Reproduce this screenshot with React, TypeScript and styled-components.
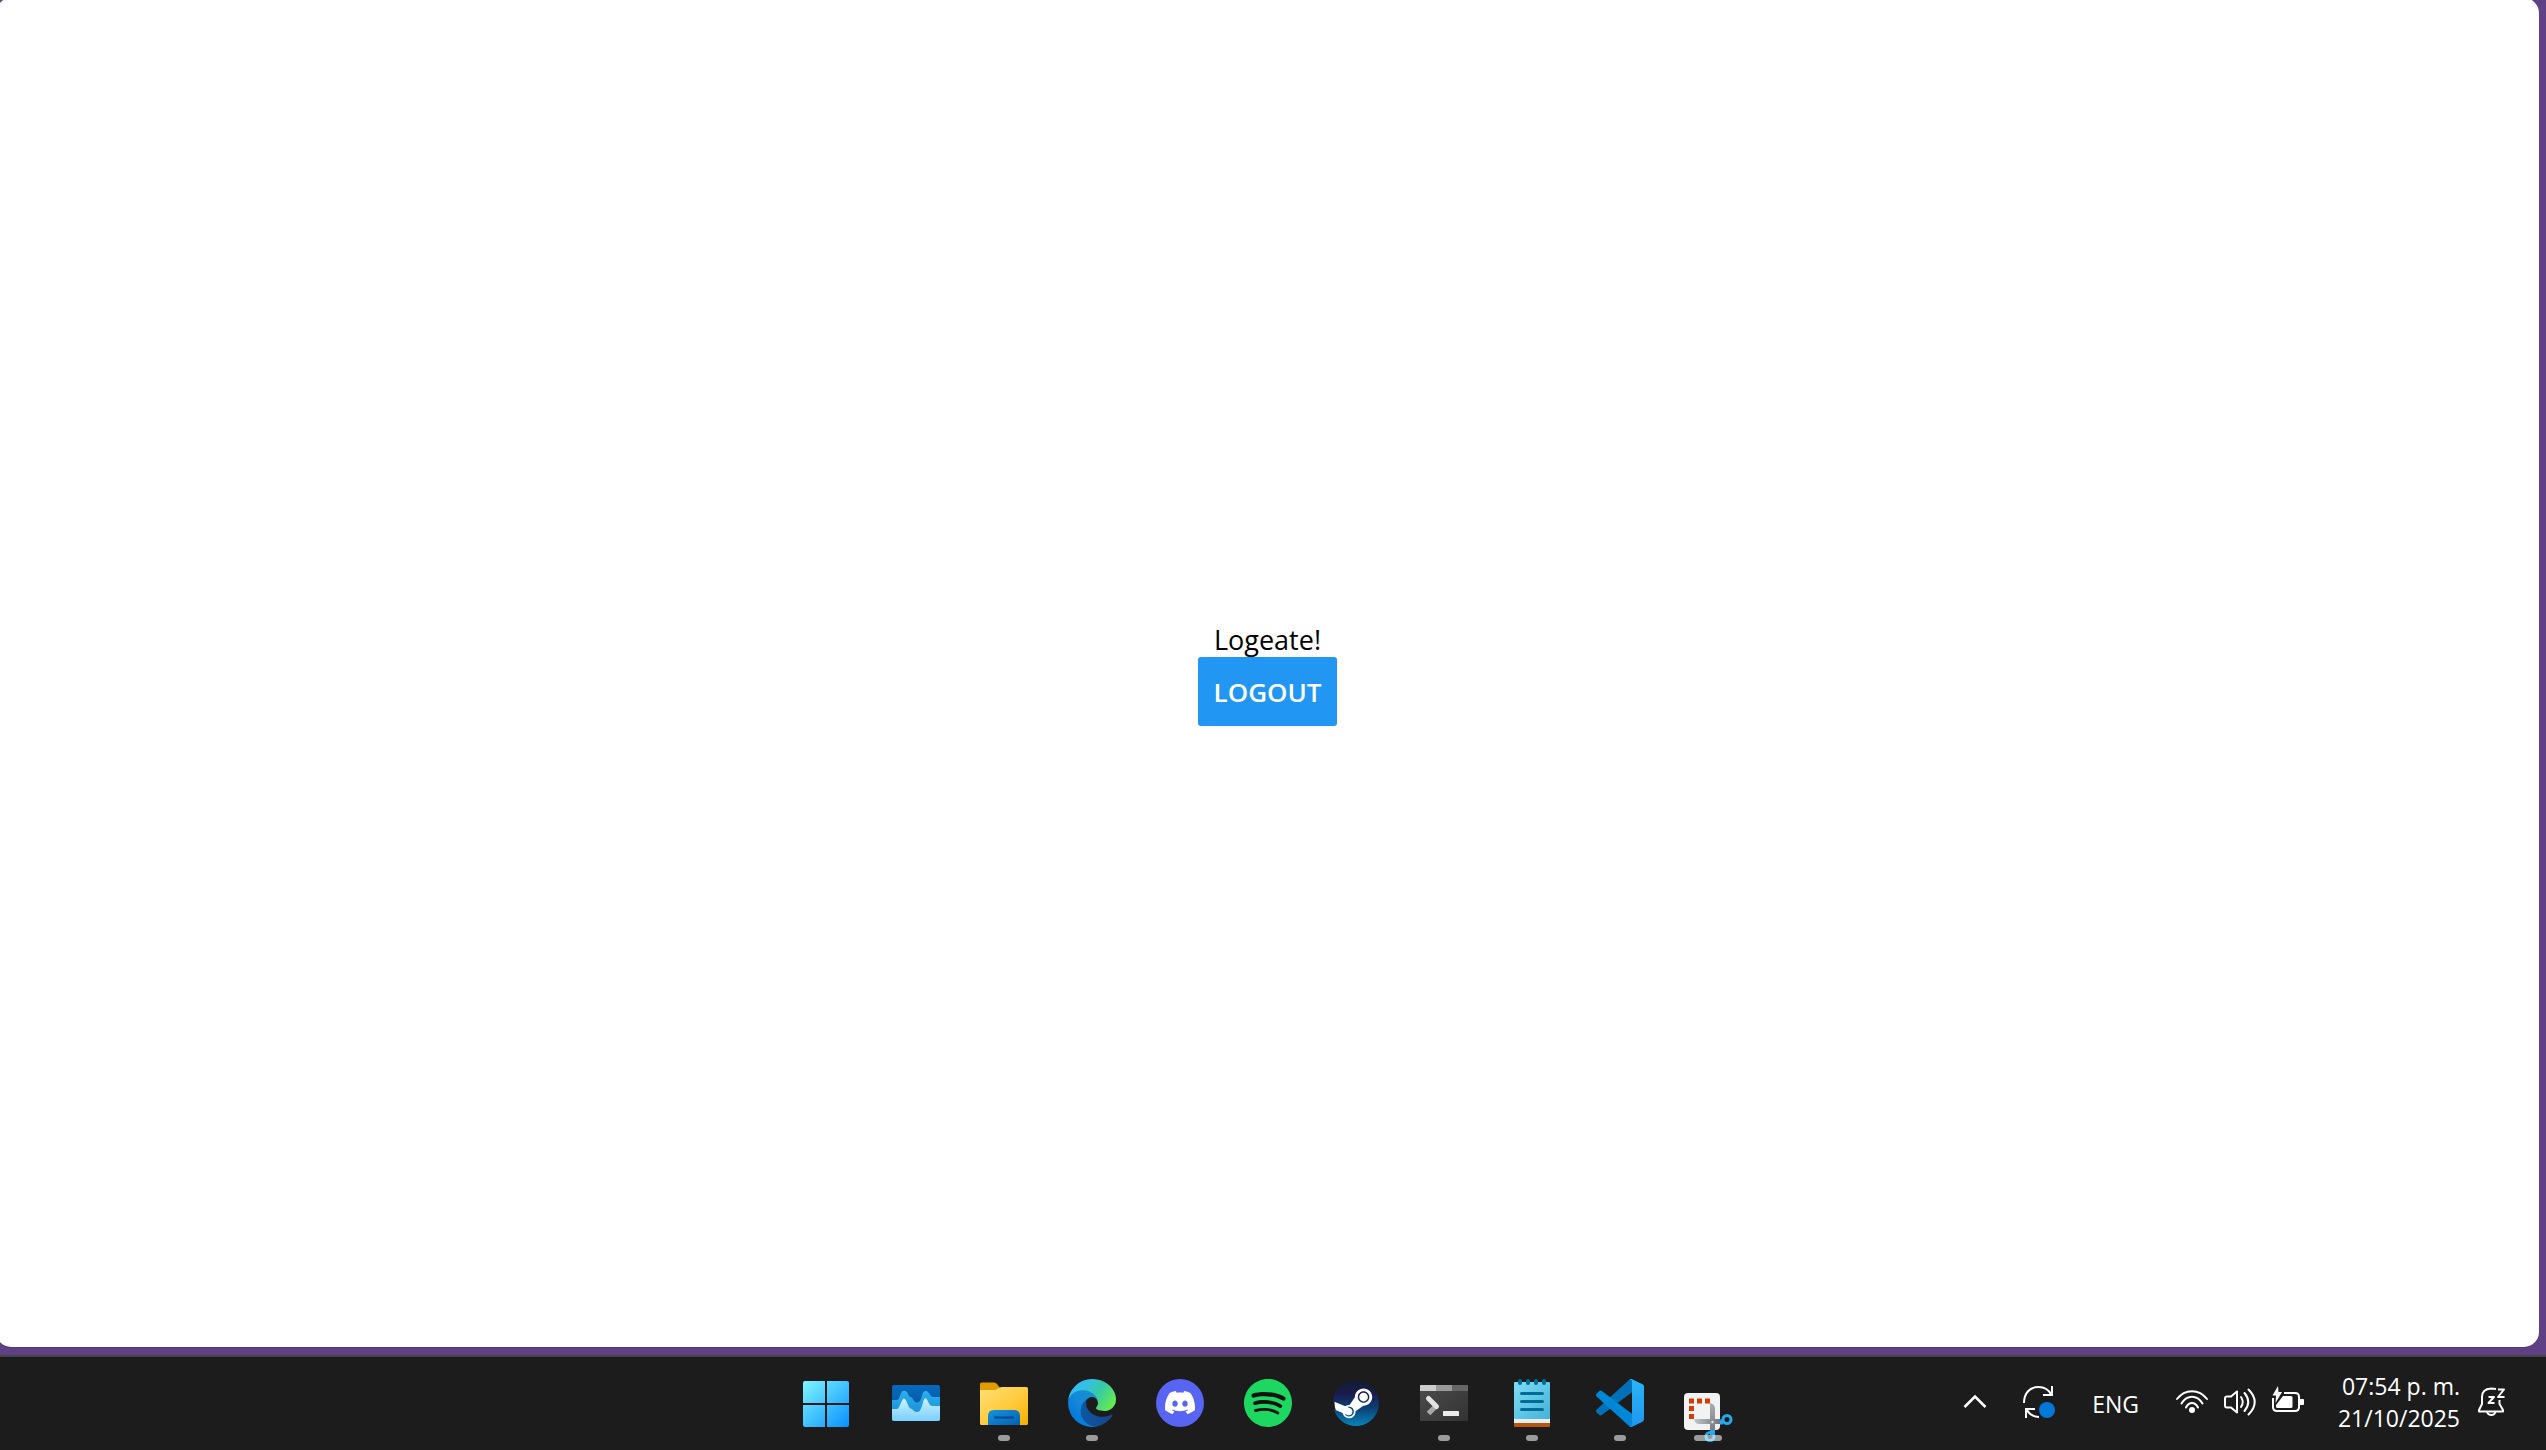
import React from "react";
import styled, { createGlobalStyle } from "styled-components";
import { SiDiscord, SiSpotify, SiSteam } from "react-icons/si";

const GlobalStyle = createGlobalStyle`
  *, *::before, *::after { box-sizing: border-box; }
  body {
    margin: 0;
    overflow: hidden;
    background: #604085;
    font-family: "Segoe UI", "Open Sans", "Noto Sans", sans-serif;
  }
`;

const Desktop = styled.div`
  display: flex;
  flex-direction: column;
  min-height: 100vh;
`;

const Window = styled.main`
  flex: 1;
  display: flex;
  flex-direction: column;
  align-items: center;
  justify-content: center;
  margin: -2px 7px 8px -4px;
  border-radius: 15px;
  background: #fff;
  box-shadow: 0 1px 0 #523a75;
`;

const Greeting = styled.p`
  margin: 0;
  padding-top: 2px;
  color: #000;
  font-size: 27px;
  line-height: 35px;
`;

const LogoutButton = styled.button`
  padding: 17px 16px 15px;
  border: 0;
  border-radius: 3px;
  background: #2196f3;
  color: #fff;
  font-family: inherit;
  font-size: 26px;
  font-weight: 600;
  line-height: 37px;
  cursor: pointer;
`;

const Taskbar = styled.footer`
  display: grid;
  grid-template-columns: 1fr auto 1fr;
  padding-right: 10px;
  border-top: 2px solid #454545;
  background: #1c1c1c;
`;

const Apps = styled.nav`
  grid-column: 2;
  display: flex;
`;

const AppButton = styled.button`
  display: flex;
  flex-direction: column;
  align-items: center;
  gap: 8px;
  width: 88px;
  padding: 22px 0 9px;
  border: 0;
  background: none;
`;

const AppIcon = styled.svg`
  display: block;
  width: 48px;
  height: 48px;
  overflow: visible;
`;

const Indicator = styled.span<{ $state: "none" | "open" | "active" }>`
  position: relative;
  width: ${(p) => (p.$state === "active" ? 28 : 12)}px;
  height: 6px;
  border-radius: 3px;
  background: ${(p) => (p.$state === "none" ? "transparent" : "rgba(255, 255, 255, 0.56)")};
`;

const Tray = styled.div`
  display: flex;
  align-items: center;
  justify-content: flex-end;
  gap: 32px;
  padding: 0 28px 3px 0;
  color: #fff;
  font-size: 23px;
  line-height: 32px;
`;

const TrayButton = styled.button`
  display: flex;
  align-items: center;
  gap: 16px;
  padding: 0;
  border: 0;
  background: none;
  color: inherit;
  font: inherit;
  text-align: right;
`;

const LanguageButton = styled(TrayButton)`
  padding: 4px 5px 0;
`;

const Clock = styled.time`
  min-width: 124px;
`;

const TrayIcon = styled.svg`
  display: block;
  width: 32px;
  height: 32px;
  overflow: visible;
  fill: none;
  stroke: #fff;
  stroke-width: 2;
`;

const StartIcon = () => (
  <AppIcon viewBox="0 0 48 48">
    <defs>
      <linearGradient id="start" gradientUnits="userSpaceOnUse" x1="0" y1="2" x2="45" y2="48">
        <stop offset="0" stopColor="#7df5ff" />
        <stop offset="0.5" stopColor="#42c2ff" />
        <stop offset="1" stopColor="#0a8fff" />
      </linearGradient>
    </defs>
    <g fill="url(#start)">
      <path d="M1 2H21V24H-1V4Q-1 2 1 2Z" />
      <path d="M23 2H43Q45 2 45 4V24H23Z" />
      <path d="M-1 26H21V48H1Q-1 48-1 46Z" />
      <path d="M23 26H45V46Q45 48 43 48H23Z" />
    </g>
  </AppIcon>
);

const MonitorIcon = () => (
  <AppIcon viewBox="0 0 48 48">
    <defs>
      <linearGradient id="monBack" x1="0" y1="0" x2="0" y2="1">
        <stop offset="0" stopColor="#0669bd" />
        <stop offset="1" stopColor="#0b4f97" />
      </linearGradient>
      <linearGradient id="monMid" x1="0" y1="0" x2="0" y2="1">
        <stop offset="0" stopColor="#2cb0ee" />
        <stop offset="1" stopColor="#1385cf" />
      </linearGradient>
      <linearGradient id="monFront" x1="0" y1="0" x2="0" y2="1">
        <stop offset="0" stopColor="#cdeeff" />
        <stop offset="1" stopColor="#79d0ff" />
      </linearGradient>
      <clipPath id="monClip"><rect y="6" width="48" height="36" rx="2" /></clipPath>
    </defs>
    <g clipPath="url(#monClip)">
      <rect y="6" width="48" height="36" fill="url(#monBack)" />
      <path d="M0 21H5Q6 21 7 19L9.500 13Q12 10.500 15 13L17 17Q18 18 20 18.500L22 22Q25 25 28 22L31 13.500Q33.500 10 36.500 13.500L39 17Q40 18 42 18H48V42H0Z" fill="url(#monMid)" />
      <path d="M0 30H5Q6 30 7 28L10 21.500Q12 17.500 14 21.500L17 28Q18 30 20 30L22 32Q25 34 27.500 32Q29 30 30 27L31.500 21.500Q33.500 17 35.500 21.500L38 26Q39 27 41 27H48V42H0Z" fill="url(#monFront)" />
    </g>
  </AppIcon>
);

const FolderIcon = () => (
  <AppIcon viewBox="0 0 48 48">
    <defs>
      <linearGradient id="folder" x1="0" y1="0" x2="1" y2="1">
        <stop offset="0" stopColor="#ffdf75" />
        <stop offset="0.55" stopColor="#ffca3c" />
        <stop offset="1" stopColor="#f5b000" />
      </linearGradient>
      <linearGradient id="pocket" x1="0" y1="0" x2="1" y2="1">
        <stop offset="0" stopColor="#1593e0" />
        <stop offset="1" stopColor="#0360b0" />
      </linearGradient>
    </defs>
    <path d="M0 5Q0 3.500 1.500 3.500H14Q16 3.500 17 5L20 9V16H0Z" fill="#e09b00" />
    <path d="M0 11H14Q16 11 18 9.500Q20 8 22 8H46.500Q48 8 48 9.500V44.500Q48 46 46.500 46H1.500Q0 46 0 44.500Z" fill="url(#folder)" />
    <path d="M8 46V37Q8 31 14 31H34Q40 31 40 37V46Z" fill="url(#pocket)" />
    <path d="M15 38.500H33" stroke="#05468c" strokeWidth="2" strokeLinecap="round" />
  </AppIcon>
);

const EdgeIcon = () => (
  <AppIcon viewBox="0 0 256 256">
    <defs>
      <linearGradient id="edgeDark" x1="0" y1="0.5" x2="1" y2="0.5">
        <stop offset="0" stopColor="#0c59a4" />
        <stop offset="1" stopColor="#16448b" />
      </linearGradient>
      <linearGradient id="edgeBlue" x1="0.9" y1="0.2" x2="0.2" y2="0.9">
        <stop offset="0" stopColor="#1691c9" />
        <stop offset="0.5" stopColor="#1588da" />
        <stop offset="1" stopColor="#0078dc" />
      </linearGradient>
      <linearGradient id="edgeGreen" x1="0" y1="0.2" x2="1" y2="0.65">
        <stop offset="0" stopColor="#35b8f2" />
        <stop offset="0.3" stopColor="#34c1e8" />
        <stop offset="0.6" stopColor="#36c9a8" />
        <stop offset="1" stopColor="#66eb4e" />
      </linearGradient>
    </defs>
    <g transform="translate(-4.63 -4.92)">
      <path fill="url(#edgeDark)" d="M235.680 195.460a93.730 93.730 0 0 1-10.540 4.710 101.870 101.870 0 0 1-35.900 6.460c-47.320 0-88.540-32.550-88.540-74.320A31.480 31.480 0 0 1 117.130 105c-42.800 1.800-53.800 46.400-53.800 72.530 0 73.880 68.090 81.370 82.760 81.370 7.910 0 19.840-2.300 27-4.560l1.310-.44a128.340 128.340 0 0 0 66.600-52.800 4 4 0 0 0-5.320-5.640z" />
      <path fill="url(#edgeBlue)" d="M110.340 246.340A79.200 79.200 0 0 1 87.600 225a80.720 80.720 0 0 1 29.530-120c3.120-1.470 8.450-4.130 15.540-4a32.350 32.350 0 0 1 25.690 13 31.880 31.880 0 0 1 6.360 18.660c0-.21 24.460-79.600-80-79.600-43.900 0-80 41.660-80 78.210a130.150 130.150 0 0 0 12.110 56 128 128 0 0 0 156.380 67.110 75.550 75.550 0 0 1-62.780-8z" />
      <path fill="url(#edgeGreen)" d="M156.940 153.780c-.81 1.050-3.300 2.500-3.300 5.660 0 2.610 1.700 5.120 4.720 7.230 14.380 10 41.490 8.680 41.560 8.680a59.560 59.560 0 0 0 30.270-8.350 61.380 61.380 0 0 0 30.430-52.880c.26-22.410-8-37.310-11.340-43.910C228.090 28.760 182.350 4.920 132.610 4.920a128 128 0 0 0-128 126.200c.48-36.540 36.800-66.050 80-66.050 3.500 0 23.460.34 42 10.070 16.340 8.580 24.900 18.940 30.850 29.210 6.180 10.670 7.280 24.150 7.280 29.520s-2.740 13.330-7.800 19.910z" />
    </g>
  </AppIcon>
);

const DiscordIcon = () => (
  <AppIcon viewBox="0 0 48 48">
    <circle cx="24" cy="24" r="24" fill="#5865f2" />
    <SiDiscord x={9} y={8.5} size={30} color="#fff" />
  </AppIcon>
);

const SpotifyIcon = () => (
  <AppIcon viewBox="0 0 48 48">
    <circle cx="24" cy="24" r="23" fill="#121212" />
    <SiSpotify size={48} color="#1ed760" />
  </AppIcon>
);

const SteamIcon = () => (
  <AppIcon viewBox="0 0 48 48">
    <defs>
      <linearGradient id="steam" x1="0" y1="0" x2="0" y2="1">
        <stop offset="0" stopColor="#111d2e" />
        <stop offset="0.3" stopColor="#1b1b4d" />
        <stop offset="0.6" stopColor="#0b3f75" />
        <stop offset="1" stopColor="#0784b8" />
      </linearGradient>
    </defs>
    <circle cx="24" cy="24" r="21.500" fill="#fff" />
    <SiSteam x={1} y={1} size={46} fill="url(#steam)" />
  </AppIcon>
);

const TerminalIcon = () => (
  <AppIcon viewBox="0 0 48 48">
    <defs>
      <linearGradient id="term" x1="0" y1="0" x2="1" y2="1">
        <stop offset="0" stopColor="#4c4c4c" />
        <stop offset="1" stopColor="#333" />
      </linearGradient>
    </defs>
    <rect y="6" width="48" height="36" rx="1" fill="url(#term)" />
    <path d="M0 12V7Q0 6 1 6H16V12Z" fill="#ccc" />
    <path d="M16 6H32V12H16Z" fill="#999" />
    <path d="M32 6H47Q48 6 48 7V12H32Z" fill="#666" />
    <path d="M8.500 34.500L16 27" stroke="#a8a8a8" strokeWidth="5" />
    <path d="M8.500 19.500L16.500 27.500" stroke="#e2e2e2" strokeWidth="5" strokeLinecap="round" />
    <rect x="23" y="32" width="16" height="5" rx="0.500" fill="#ebebeb" />
  </AppIcon>
);

const NotepadIcon = () => (
  <AppIcon viewBox="0 0 48 48">
    <defs>
      <linearGradient id="note" x1="0" y1="0" x2="1" y2="1">
        <stop offset="0" stopColor="#80dcf6" />
        <stop offset="1" stopColor="#42b3d8" />
      </linearGradient>
    </defs>
    <rect x="6" y="34" width="36" height="14" rx="1" fill="#b6560f" />
    <rect x="6" y="34" width="36" height="10" fill="#ededed" />
    <rect x="6" y="3" width="36" height="37" rx="1" fill="url(#note)" />
    <g stroke="#036c95" strokeLinecap="round">
      <path d="M12 2V4M20 2V4M28 2V4M36 2V4" strokeWidth="4" />
      <path d="M13.500 14.500H34.500M13.500 22.500H34.500M13.500 30.500H34.500" strokeWidth="3" />
    </g>
  </AppIcon>
);

const CodeIcon = () => (
  <AppIcon viewBox="0 0 100 100">
    <defs>
      <linearGradient id="codeBlade" x1="0" y1="0" x2="0" y2="1">
        <stop offset="0" stopColor="#2bb4f8" />
        <stop offset="1" stopColor="#1e97ee" />
      </linearGradient>
    </defs>
    <path fill="#0071b8" d="M96.461 10.796L75.857.876C73.472-.273 70.622.212 68.750 2.083L1.299 63.583C-.516 65.237-.514 68.094 1.303 69.745L6.813 74.754C8.298 76.104 10.535 76.204 12.134 74.990L93.361 13.370C96.086 11.303 100 13.246 100 16.667V16.427C100 14.026 98.625 11.838 96.461 10.796Z" />
    <path fill="#0088d8" d="M96.461 89.204L75.857 99.124C73.472 100.273 70.622 99.788 68.750 97.917L1.299 36.417C-.516 34.763-.514 31.906 1.303 30.255L6.813 25.246C8.298 23.896 10.535 23.796 12.134 25.009L93.361 86.630C96.086 88.697 100 86.754 100 83.333V83.572C100 85.973 98.625 88.162 96.461 89.204Z" />
    <path fill="url(#codeBlade)" d="M75.858 99.126C73.472 100.274 70.622 99.788 68.750 97.917C71.056 100.223 75 98.590 75 95.328V4.672C75 1.410 71.056-.223 68.750 2.083C70.622.211 73.472-.274 75.858.874L96.459 10.781C98.623 11.822 100 14.011 100 16.413V83.587C100 85.989 98.623 88.179 96.459 89.220L75.858 99.126Z" />
  </AppIcon>
);

const SnipIcon = () => (
  <AppIcon viewBox="0 0 48 48">
    <defs>
      <linearGradient id="bladeV" gradientUnits="userSpaceOnUse" x1="0" y1="10" x2="0" y2="36">
        <stop offset="0" stopColor="#a9adb2" />
        <stop offset="1" stopColor="#7c8085" />
      </linearGradient>
      <linearGradient id="bladeH" gradientUnits="userSpaceOnUse" x1="10" y1="0" x2="36" y2="0">
        <stop offset="0" stopColor="#c0c5ca" />
        <stop offset="1" stopColor="#74787d" />
      </linearGradient>
    </defs>
    <g transform="translate(0 14)">
      <rect width="36" height="37" rx="4" fill="#f0f2f4" />
      <path fill="#d83b01" d="M5 5.500h5v5H5zM13 5.500h5v5h-5zM21 5.500h5v5h-5zM5 13h5v5H5zM5 21h5v5H5z" />
      <path d="M36 29H39" stroke="#27a8ea" strokeWidth="5" />
      <path d="M28.500 36V42" stroke="#27a8ea" strokeWidth="5" />
      <circle cx="43" cy="26.500" r="4" fill="none" stroke="#27a8ea" strokeWidth="3" />
      <circle cx="26" cy="43.500" r="4" fill="none" stroke="#27a8ea" strokeWidth="3" />
      <path d="M26 10Q31 11 31 16V37H26Z" fill="url(#bladeV)" />
      <path d="M10 26H36V31H15Q11 31 10 26Z" fill="url(#bladeH)" />
      <circle cx="28.500" cy="29" r="1.200" fill="#dfe2e5" />
    </g>
  </AppIcon>
);

const apps = [
  { name: "Start", Icon: StartIcon, state: "none" },
  { name: "Monitor", Icon: MonitorIcon, state: "none" },
  { name: "Files", Icon: FolderIcon, state: "open" },
  { name: "Edge", Icon: EdgeIcon, state: "open" },
  { name: "Discord", Icon: DiscordIcon, state: "none" },
  { name: "Spotify", Icon: SpotifyIcon, state: "none" },
  { name: "Steam", Icon: SteamIcon, state: "none" },
  { name: "Terminal", Icon: TerminalIcon, state: "open" },
  { name: "Notepad", Icon: NotepadIcon, state: "open" },
  { name: "Code", Icon: CodeIcon, state: "open" },
  { name: "Snip", Icon: SnipIcon, state: "active" },
] as const;

export default function App() {
  return (
    <>
      <GlobalStyle />
      <Desktop>
        <Window>
          <Greeting>Logeate!</Greeting>
          <LogoutButton type="button">LOGOUT</LogoutButton>
        </Window>
        <Taskbar>
          <Apps>
            {apps.map(({ name, Icon, state }) => (
              <AppButton key={name} type="button" aria-label={name}>
                <Icon />
                <Indicator $state={state} />
              </AppButton>
            ))}
          </Apps>
          <Tray>
            <TrayButton type="button" aria-label="Hidden icons">
              <TrayIcon viewBox="0 0 32 32">
                <path d="M5.500 21L16 10.500L26.500 21" strokeWidth="2.500" />
              </TrayIcon>
            </TrayButton>
            <TrayButton type="button" aria-label="Updates">
              <TrayIcon viewBox="0 0 32 32">
                <path d="M1 17C1 7 7 1 15.500 1C21.500 1 26 4 28.500 9M29 0V9H20" />
                <path d="M3 32V23H12M3.500 23.500C6.500 28.500 10.500 31 16 31" />
                <circle cx="24" cy="24" r="8" fill="#0078d7" stroke="none" />
              </TrayIcon>
            </TrayButton>
            <LanguageButton type="button">ENG</LanguageButton>
            <TrayButton type="button" aria-label="Network, sound and battery">
              <TrayIcon viewBox="0 0 32 32" strokeLinecap="round">
                <path d="M1 13C9 2.500 23 2.500 31 13M5.500 17.500C11 8.500 21 8.500 26.500 17.500M10 21.500C13 15.500 19 15.500 22 21.500" />
                <circle cx="16" cy="24" r="3" fill="#fff" stroke="none" />
              </TrayIcon>
              <TrayIcon viewBox="0 0 32 32" strokeLinecap="round" strokeLinejoin="round">
                <path d="M13 5.500V26.500L7 21.500H3Q1 21.500 1 19.500V12.500Q1 10.500 3 10.500H7Z" />
                <path d="M17 11Q20.500 16 17 21M20.500 7Q28 16 20.500 25M24.500 3.500Q37 16 24.500 28.500" />
              </TrayIcon>
              <TrayIcon viewBox="0 0 32 32">
                <path d="M12 7H23Q27 7 27 11V21Q27 25 23 25H5Q1 25 1 21V12" />
                <path d="M28 13H31Q32 13 32 14V18Q32 19 31 19H28Z" fill="#fff" stroke="none" />
                <path d="M11 10H19Q20.500 10 20.500 11.500V20.500Q20.500 22 19 22H5.500Q4 22 4 20.500V19Z" fill="#fff" stroke="none" />
                <path d="M6 0L0.500 9.500H4L3.500 17L10 6H6.500Z" fill="#fff" stroke="none" />
              </TrayIcon>
            </TrayButton>
            <TrayButton type="button">
              <Clock dateTime="2025-10-21T19:54">
                07:54 p. m.
                <br />
                21/10/2025
              </Clock>
              <TrayIcon viewBox="0 0 32 32" strokeLinejoin="round">
                <path d="M20 3Q18 2.500 15 2.500Q6 3 6 11V18L3 24V25.500H27V24L23.500 18V14" />
                <path d="M11 26Q12 29 15.500 29Q18.500 29 19.500 26" />
                <path d="M12.500 11H18L12.500 17H18.500M22 3.500H28L22 11H28.500" />
              </TrayIcon>
            </TrayButton>
          </Tray>
        </Taskbar>
      </Desktop>
    </>
  );
}
